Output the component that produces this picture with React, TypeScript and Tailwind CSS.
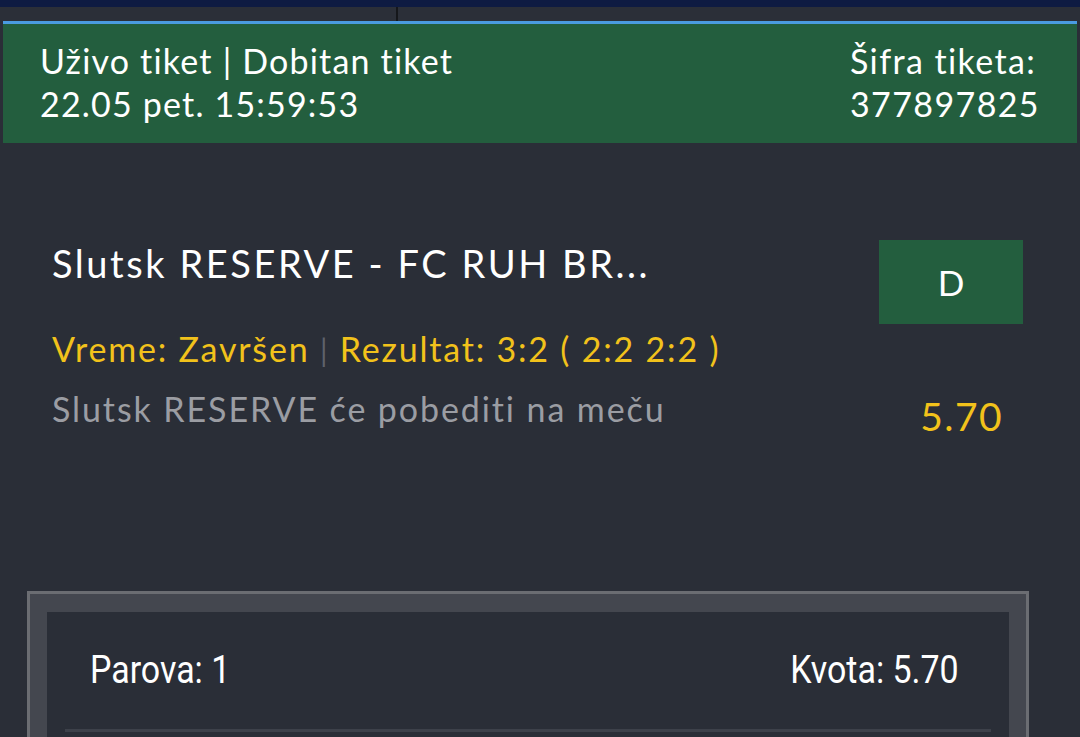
const lato = "font-['Lato',sans-serif] tracking-[0.035em]";
const narrow = "font-['Roboto',sans-serif] text-[39px] leading-none text-white scale-x-[0.87]";

const TicketHeader = () => {
  return (
    <div className="ml-[3px] mr-[3px]">
      <div className="h-[3px] bg-[#4a9be0]" />
      <div className={`flex justify-between bg-[#235e3e] h-[119px] pt-[15px] pl-[37px] pr-[37px] text-white text-[34px] leading-[43px] ${lato}`}>
        <div>
          <div>Uživo tiket | Dobitan tiket</div>
          <div>22.05 pet. 15:59:53</div>
        </div>
        <div className="tracking-[1.4px]">
          <div>Šifra tiketa:</div>
          <div>377897825</div>
        </div>
      </div>
    </div>
  );
};

const MatchRow = () => {
  return (
    <div className="pl-[52px] pr-[57px] pt-[97px] font-['Lato',sans-serif]">
      <div className="flex justify-between items-start">
        <div className="mt-[4px] text-white text-[38px] leading-none tracking-[2.55px]">Slutsk RESERVE - FC RUH BR...</div>
        <div className="w-[144px] h-[84px] bg-[#235e3e] flex items-center justify-center text-white text-[35px]">
          D
        </div>
      </div>
      <div className="flex justify-between items-start mt-[8px]">
        <div>
          <div className="text-[#f2c21b] text-[34px] leading-none tracking-[1.8px]">
            Vreme: Završen <span className="text-[#5e626b] text-[30px]">|</span> Rezultat: 3:2 ( 2:2 2:2 )
          </div>
          <div className="text-[#9b9da3] text-[34px] leading-none tracking-[1.9px] mt-[26px]">
            Slutsk RESERVE će pobediti na meču
          </div>
        </div>
        <div className="w-[144px] pr-[20px] text-right text-[#f2c21b] text-[39px] leading-none tracking-[1.4px] mt-[65px]">5.70</div>
      </div>
    </div>
  );
};

const Summary = () => {
  return (
    <div className="mt-[155px] ml-[27px] mr-[51px] border-[3px] border-[#6b6d72] bg-[#44474f] pt-[18px] px-[17px]">
      <div className="bg-[#2a2e37] px-[18px] h-[140px]">
        <div className="flex justify-between pl-[25px] pr-[32px] pt-[39px] pb-[39px]">
          <span className={`${narrow} origin-left`}>Parova: 1</span>
          <span className={`${narrow} origin-right`}>Kvota: 5.70</span>
        </div>
        <div className="h-[3px] bg-[#3d414a]" />
      </div>
    </div>
  );
};

export default function App() {
  return (
    <div className="w-[1080px] h-[737px] overflow-hidden bg-[#2a2e37]">
      <div className="h-[7px] bg-[#0e1b42]" />
      <div className="h-[14px] bg-[#2b2f38] flex">
        <div className="w-[396px]" />
        <div className="w-[2px] bg-[#15171b]" />
      </div>
      <TicketHeader />
      <MatchRow />
      <Summary />
    </div>
  );
}
